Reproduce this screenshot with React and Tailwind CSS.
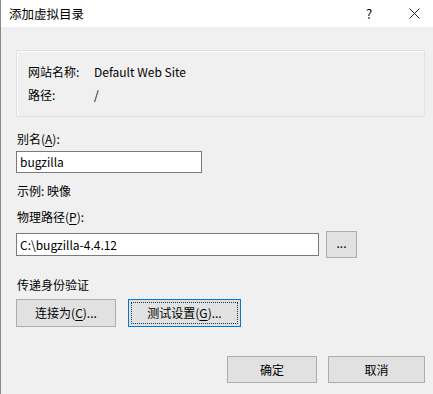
const font = { fontFamily: '"Segoe UI", "Noto Sans CJK SC", "Noto Sans", sans-serif' };

const Mn = ({ children }) => <span className="underline underline-offset-2">{children}</span>;

const Btn = ({ children, focused, className = "" }) => (
  <button
    type="button"
    className={
      "flex items-center justify-center bg-[#e1e1e1] text-[12px] leading-[16px] text-black border " +
      (focused ? "border-[#0078d7] p-[2px] " : "border-[#adadad] ") +
      className
    }
  >
    {focused ? (
      <span className="flex h-full w-full items-center justify-center border border-dotted border-[#333]">
        {children}
      </span>
    ) : (
      children
    )}
  </button>
);

export default function App() {
  return (
    <div
      className="flex h-[394px] w-[433px] flex-col border-l border-[#8a8a8a] bg-[#f0f0f0] text-[12px] leading-[16px] text-black"
      style={font}
    >
      <div className="flex h-[27px] items-center bg-white pl-[8px]">
        <span className="flex-1 text-[12.5px]">添加虚拟目录</span>
        <span className="w-[52px] text-center text-[13px]">?</span>
        <span className="flex w-[38px] justify-center">
          <svg width="11" height="11" viewBox="0 0 11 11" stroke="#222" strokeWidth="1">
            <path d="M0.5 0.5 L10.5 10.5 M10.5 0.5 L0.5 10.5" />
          </svg>
        </span>
      </div>

      <div className="flex flex-col pl-[15px] pr-[8px]">
        <div className="mt-[23px] flex h-[67px] w-[409px] flex-col justify-center gap-[7px] border border-[#e2e2e2] pl-[11px] shadow-[inset_1px_1px_0_#fafafa]">
          <div className="flex">
            <span className="w-[66px]">网站名称:</span>
            <span>Default Web Site</span>
          </div>
          <div className="flex">
            <span className="w-[66px]">路径:</span>
            <span>/</span>
          </div>
        </div>

        <div className="mt-[14px] pl-[1px]">
          别名(<Mn>A</Mn>):
        </div>
        <div className="mt-[4px] flex h-[22px] w-[186px] items-center border border-[#7a7a7a] bg-white pl-[3px]">
          bugzilla
        </div>

        <div className="mt-[10px] pl-[1px]">示例: 映像</div>

        <div className="mt-[10px] pl-[1px]">
          物理路径(<Mn>P</Mn>):
        </div>
        <div className="mt-[6px] flex h-[27px] items-center">
          <div className="flex h-[23px] w-[303px] items-center border border-[#7a7a7a] bg-white pl-[3px]">
            C:\bugzilla-4.4.12
          </div>
          <Btn className="ml-[7px] h-[27px] w-[31px] pb-[4px]">...</Btn>
        </div>

        <div className="mt-[19px] pl-[1px]">传递身份验证</div>
        <div className="mt-[6px] flex gap-[12px]">
          <Btn className="h-[28px] w-[100px]">
            连接为(<Mn>C</Mn>)...
          </Btn>
          <Btn focused className="h-[28px] w-[113px]">
            测试设置(<Mn>G</Mn>)...
          </Btn>
        </div>

        <div className="mt-[29px] flex justify-end gap-[11px]">
          <Btn className="h-[27px] w-[90px]">确定</Btn>
          <Btn className="h-[27px] w-[97px]">取消</Btn>
        </div>
      </div>
    </div>
  );
}
